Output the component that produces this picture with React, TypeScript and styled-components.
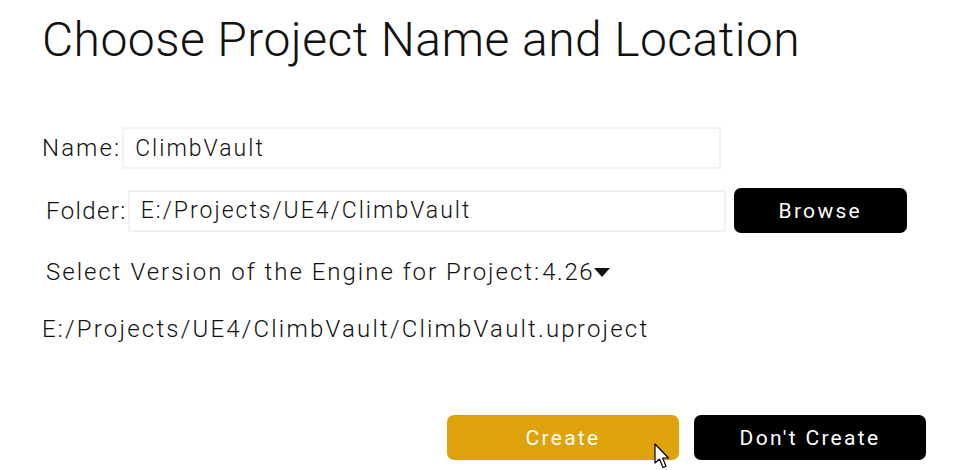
import React from "react";
import styled, { createGlobalStyle } from "styled-components";

const GlobalStyle = createGlobalStyle`
  html, body {
    margin: 0;
    padding: 0;
    background: #ffffff;
  }
  body {
    font-family: Roboto, "Liberation Sans", sans-serif;
    color: #111;
  }
`;

const Page = styled.div`
  width: 956px;
  height: 470px;
  box-sizing: border-box;
  padding: 12px 30px 0 42px;
  display: flex;
  flex-direction: column;
  position: relative;
  overflow: hidden;
`;

const Title = styled.h1`
  margin: 0;
  font-size: 48px;
  font-weight: 300;
  letter-spacing: 0.45px;
  line-height: 56px;
  color: #111;
`;

const Form = styled.div`
  margin-top: 59px;
  display: flex;
  flex-direction: column;
`;

const Row = styled.div<{ $indent?: number; $top?: number }>`
  display: flex;
  align-items: center;
  padding-left: ${(p) => p.$indent ?? 0}px;
  margin-top: ${(p) => p.$top ?? 0}px;
`;

const Label = styled.span<{ $spacing?: number }>`
  font-size: 24px;
  font-weight: 300;
  letter-spacing: ${(p) => p.$spacing ?? 2.1}px;
  margin-right: 1px;
`;

const TextField = styled.input<{ $width: number }>`
  width: ${(p) => p.$width}px;
  height: 42px;
  box-sizing: border-box;
  border: 2px solid #f2f2f2;
  padding: 0 11px;
  font-family: inherit;
  font-size: 23px;
  font-weight: 300;
  letter-spacing: 2px;
  color: #111;
  outline: none;
  background: #fff;
`;

const Button = styled.button<{ $variant?: "dark" | "gold"; $width?: number }>`
  width: ${(p) => p.$width ?? 232}px;
  height: 45px;
  border: none;
  border-radius: 7px;
  background: ${(p) => (p.$variant === "gold" ? "#dea30b" : "#000")};
  color: #fff;
  font-family: inherit;
  font-size: 21px;
  font-weight: 400;
  letter-spacing: 2.3px;
  cursor: pointer;
`;

const BrowseButton = styled(Button)`
  margin-left: 8px;
`;

const VersionPicker = styled.span`
  display: inline-flex;
  align-items: center;
  font-size: 24px;
  font-weight: 300;
  letter-spacing: 1.6px;
`;

const Caret = styled.span`
  display: inline-block;
  width: 0;
  height: 0;
  border-left: 8px solid transparent;
  border-right: 8px solid transparent;
  border-top: 9px solid #111;
`;

const PathText = styled.div`
  margin-top: 29px;
  font-size: 24px;
  font-weight: 300;
  letter-spacing: 2.2px;
`;

const Actions = styled.div`
  margin-top: 72px;
  display: flex;
  justify-content: flex-end;
  gap: 15px;
`;

const ButtonWrap = styled.div`
  position: relative;
`;

const Pointer = styled.svg`
  position: absolute;
  left: 207px;
  top: 28px;
  pointer-events: none;
`;

export default function App() {
  return (
    <>
      <GlobalStyle />
      <Page>
        <Title>Choose Project Name and Location</Title>
        <Form>
          <Row>
            <Label>Name:</Label>
            <TextField $width={599} defaultValue="ClimbVault" />
          </Row>
          <Row $indent={4} $top={19}>
            <Label $spacing={1.4}>Folder:</Label>
            <TextField $width={598} defaultValue="E:/Projects/UE4/ClimbVault" />
            <BrowseButton $width={173}>Browse</BrowseButton>
          </Row>
          <Row $indent={4} $top={25}>
            <Label $spacing={2}>Select Version of the Engine for Project:</Label>
            <VersionPicker>
              4.26
              <Caret />
            </VersionPicker>
          </Row>
        </Form>
        <PathText>E:/Projects/UE4/ClimbVault/ClimbVault.uproject</PathText>
        <Actions>
          <ButtonWrap>
            <Button $variant="gold">Create</Button>
            <Pointer width="18" height="27" viewBox="0 0 18 27">
              <path
                d="M1 1 L1 20 L5.5 16 L9 24.5 L12 23.2 L8.6 15 L14.5 15 Z"
                fill="#fff"
                stroke="#000"
                strokeWidth="1.2"
                strokeLinejoin="round"
              />
            </Pointer>
          </ButtonWrap>
          <Button>Don't Create</Button>
        </Actions>
      </Page>
    </>
  );
}
